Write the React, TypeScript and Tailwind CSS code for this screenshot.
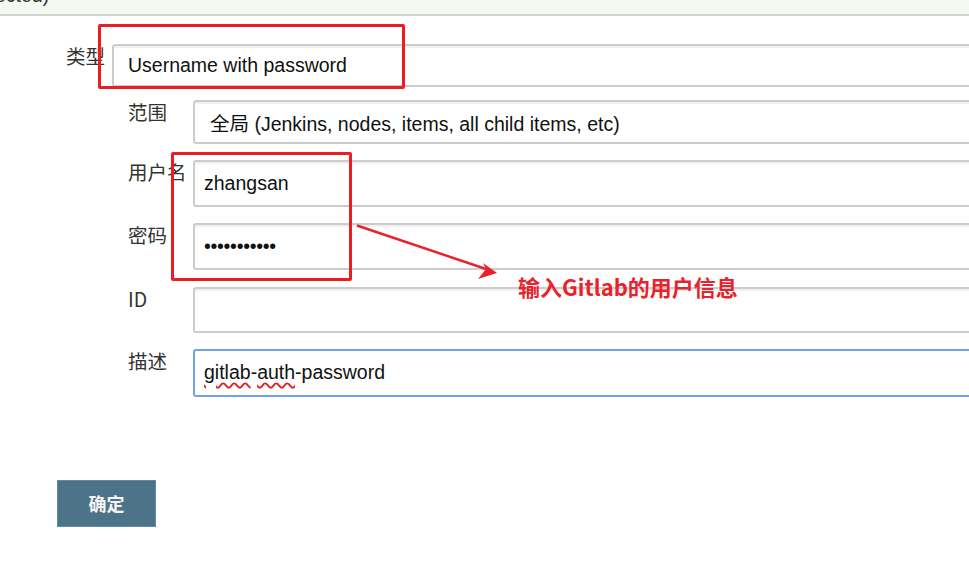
const latin = "font-['Liberation_Sans','Noto_Sans_CJK_SC',sans-serif]";
const cjk = "font-['Noto_Sans_CJK_SC','Liberation_Sans',sans-serif]";

function Field({
  children,
  focused = false,
  className = "",
}: {
  children?: React.ReactNode;
  focused?: boolean;
  className?: string;
}) {
  return (
    <div
      className={`flex-none w-[880px] flex items-center rounded-[3px] border-2 bg-white pl-[9px] text-[19.5px] text-[#111] ${latin} ${
        focused
          ? "border-[#72a3ea]"
          : "border-[#cccccc] shadow-[inset_0_2px_1px_#f0f0f0]"
      } ${className}`}
    >
      {children}
    </div>
  );
}

function Row({
  label,
  height,
  children,
  focused,
}: {
  label: string;
  height: string;
  children?: React.ReactNode;
  focused?: boolean;
}) {
  return (
    <div className="flex">
      <div
        className={`w-[65px] flex-none text-[19.5px] leading-[24px] text-[#333] ${cjk}`}
      >
        {label}
      </div>
      <Field focused={focused} className={height}>
        {children}
      </Field>
    </div>
  );
}

export default function App() {
  return (
    <div className="relative w-[969px] h-[586px] overflow-hidden bg-white">
      {/* top bar, cut off */}
      <div className="h-[16px] overflow-hidden border-b-2 border-[#d3d6cf] bg-[#f6f8f2]">
        <div
          className={`-mt-[17px] -ml-[5px] text-[19.5px] leading-[24px] text-[#333] ${latin}`}
        >
          ected)
        </div>
      </div>

      <div className="pt-[28px]">
        <div className="flex pl-[66px]">
          <div
            className={`w-[46px] flex-none text-[19.5px] leading-[24px] text-[#333] ${cjk}`}
          >
            类型
          </div>
          <Field className="h-[43px] pl-[14px]">Username with password</Field>
        </div>

        <div className="mt-[13px] flex flex-col pl-[128px]">
          <Row label="范围" height="h-[44px] pl-[15px] pt-[6px]">
            全局 (Jenkins, nodes, items, all child items, etc)
          </Row>
          <div className="mt-[16px]">
            <Row label="用户名" height="h-[47px]">
              zhangsan
            </Row>
          </div>
          <div className="mt-[16px]">
            <Row label="密码" height="h-[47px]">
              <span className="tracking-[-0.3px]">•••••••••••</span>
            </Row>
          </div>
          <div className="mt-[17px]">
            <Row label="ID" height="h-[46px]" />
          </div>
          <div className="mt-[16px]">
            <Row label="描述" height="h-[48px]" focused>
              <span className="underline decoration-wavy decoration-[#e02020] decoration-[1.5px] underline-offset-[3px]">
                gitlab
              </span>
              -
              <span className="underline decoration-wavy decoration-[#e02020] decoration-[1.5px] underline-offset-[3px]">
                auth
              </span>
              -password
            </Row>
          </div>
        </div>

        <div className="mt-[83px] pl-[57px]">
          <button
            className={`flex h-[47px] w-[99px] items-center justify-center border border-[#5d8aa5] bg-[#4d7389] text-[18px] font-bold text-[#f4f4f4] ${cjk}`}
          >
            确定
          </button>
        </div>
      </div>

      {/* annotations */}
      <div className="pointer-events-none absolute left-[98px] top-[24px] h-[65px] w-[307px] rounded-[2px] border-[3px] border-[#ea1d25]" />
      <div className="pointer-events-none absolute left-[171px] top-[152px] h-[129px] w-[181px] rounded-[2px] border-[3px] border-[#ea1d25]" />
      <svg
        className="pointer-events-none absolute left-0 top-0"
        width="969"
        height="586"
        viewBox="0 0 969 586"
      >
        <line
          x1="357"
          y1="225.5"
          x2="486"
          y2="269"
          stroke="#e8232b"
          strokeWidth="2.5"
        />
        <polygon points="497,273 483,263 486,269 478,279" fill="#e8232b" />
      </svg>
      <div
        className={`absolute left-[518px] top-[272px] text-[22px] font-bold leading-[28px] text-[#e8232b] ${cjk}`}
      >
        输入Gitlab的用户信息
      </div>
    </div>
  );
}
